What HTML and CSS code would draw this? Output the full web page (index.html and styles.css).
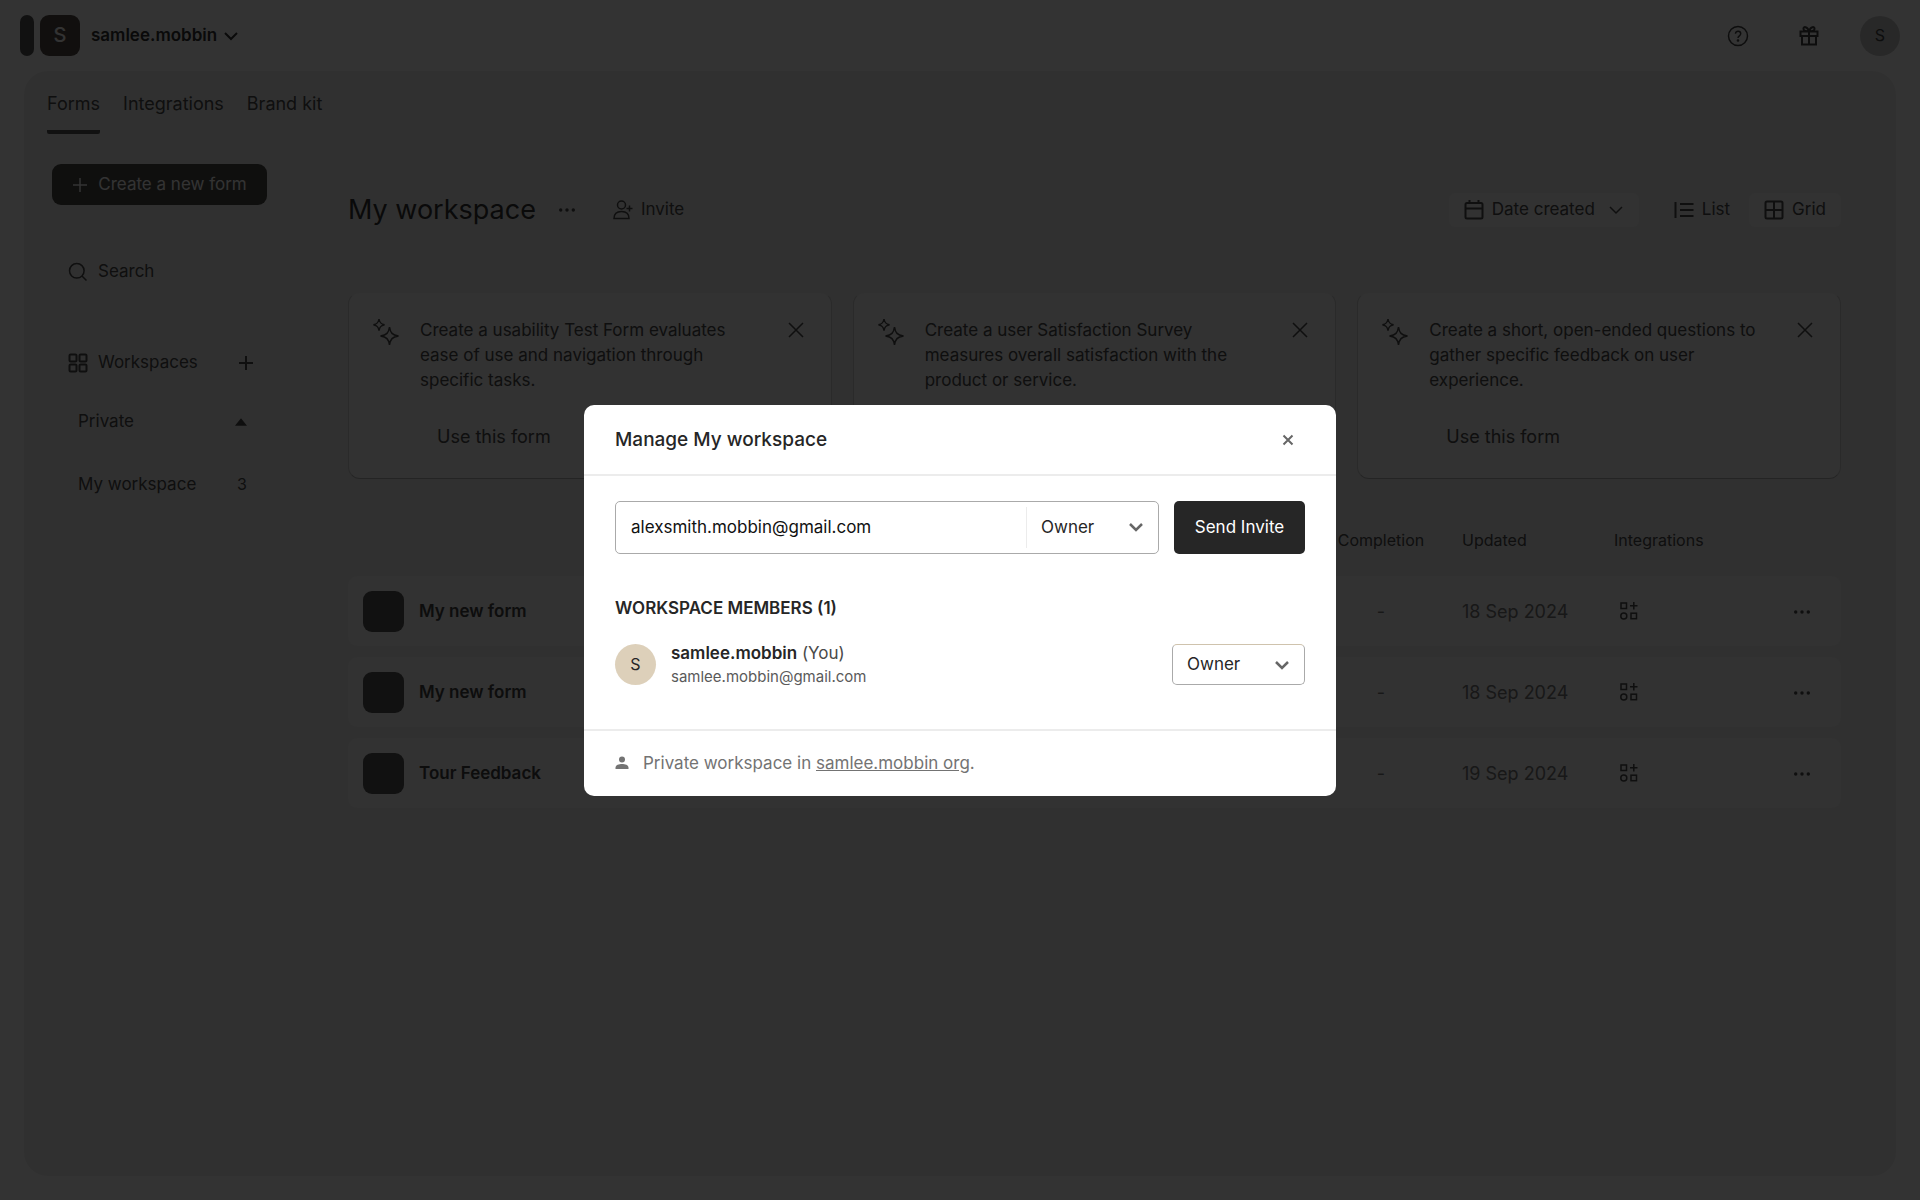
FILE: index.html
```html
<!DOCTYPE html>
<html lang="en">
<head>
<meta charset="utf-8">
<meta name="viewport" content="width=device-width, initial-scale=1">
<title>My workspace</title>
<link rel="stylesheet" href="styles.css">
</head>
<body>
<svg class="sprite" aria-hidden="true">
  <symbol id="chevron" viewBox="0 0 16 16"><path d="M2 5l6 6 6-6"/></symbol>
  <symbol id="dots" viewBox="0 0 20 20"><g fill="currentColor" stroke="none"><circle cx="3" cy="10" r="1.900"/><circle cx="10" cy="10" r="1.900"/><circle cx="17" cy="10" r="1.900"/></g></symbol>
  <symbol id="plus" viewBox="0 0 16 16"><path d="M8 1v14M1 8h14"/></symbol>
  <symbol id="cross" viewBox="0 0 16 16"><path d="M1 1l14 14M15 1L1 15"/></symbol>
  <symbol id="sparkles" viewBox="0 0 28 28"><path d="M7 1c.6 3.800 1.800 5 5.500 5.800C8.800 7.600 7.600 8.800 7 12.600 6.400 8.800 5.200 7.600 1.500 6.800 5.200 6 6.400 4.800 7 1zM17.500 9c.9 6 2.800 8 9 9-6.200 1-8.100 3-9 9-.9-6-2.800-8-9-9 6.200-1 8.100-3 9-9z"/></symbol>
  <symbol id="apps" viewBox="0 0 20 20"><rect x="2" y="2" width="5.500" height="5.500"/><circle cx="4.800" cy="15" r="3"/><rect x="12" y="12.200" width="5.500" height="5.500"/><path d="M14.800 1v7.500M11 4.800h7.500"/></symbol>
</svg>

<header class="topbar">
  <span class="logo"></span>
  <button class="account" type="button"><span class="account-badge">S</span>samlee.mobbin<svg class="icon i16 bold"><use href="#chevron"/></svg></button>
  <nav class="top-actions">
    <button class="plain help" type="button" aria-label="Help"><svg class="icon i22" viewBox="0 0 22 22"><circle cx="11" cy="11" r="9.500"/><path d="M8.500 8.800c0-3.400 5.200-3.200 5.200 0 0 2-2.700 2-2.700 4.200"/><circle cx="11" cy="15.500" r=".6"/></svg></button>
    <button class="plain" type="button" aria-label="Rewards"><svg class="icon i22 bold" viewBox="0 0 22 22"><path d="M2.500 6.500h17v4.500h-17zM4 11v8.500h14V11M11 6.500v13M11 6.500C9.500 1 5 1.200 5.500 4.200 5.800 6 8.500 6.500 11 6.500zM11 6.500c1.500-5.500 6-5.300 5.500-2.300C16.200 6 13.500 6.500 11 6.500z"/></svg></button>
    <button class="avatar" type="button">S</button>
  </nav>
</header>

<div class="panel">
  <nav class="tabs">
    <a class="tab active" href="#forms">Forms</a>
    <a class="tab" href="#integrations">Integrations</a>
    <a class="tab" href="#brand">Brand kit</a>
  </nav>
  <div class="columns">
    <aside class="sidebar">
      <button class="create" type="button"><svg class="icon i16"><use href="#plus"/></svg>Create a new form</button>
      <label class="search"><svg class="icon i20" viewBox="0 0 20 20"><circle cx="8.800" cy="8.800" r="7.300"/><path d="M14 14l4.500 4.500"/></svg><input type="search" placeholder="Search" aria-label="Search"></label>
      <div class="side-row heading">
        <svg class="icon i20 bold" viewBox="0 0 20 20"><rect x="1.500" y="1.500" width="7" height="7" rx="1"/><rect x="11.500" y="1.500" width="7" height="7" rx="1"/><rect x="1.500" y="11.500" width="7" height="7" rx="1"/><rect x="11.500" y="11.500" width="7" height="7" rx="1"/></svg>
        <span>Workspaces</span>
        <button class="plain push" type="button" aria-label="Add workspace"><svg class="icon i16 bold"><use href="#plus"/></svg></button>
      </div>
      <div class="side-row group"><span>Private</span><button class="plain push" type="button" aria-label="Collapse"><svg class="icon i12" viewBox="0 0 12 12"><path d="M1.500 9L6 3.500 10.500 9z" fill="currentColor"/></svg></button></div>
      <a class="side-row item" href="#workspace"><span>My workspace</span><span class="count push">3</span></a>
    </aside>

    <main class="content">
      <div class="toolbar">
        <h1>My workspace</h1>
        <button class="plain more" type="button" aria-label="More"><svg class="icon i18"><use href="#dots"/></svg></button>
        <button class="plain labelled" type="button"><svg class="icon i20" viewBox="0 0 20 20"><circle cx="8.500" cy="5" r="4"/><path d="M1 18.500c0-4.500 3-7 7.500-7s7.500 2.500 7.500 7zM16.500 5.500v6M13.500 8.500h6"/></svg>Invite</button>
        <div class="view-actions">
          <button class="chip" type="button"><svg class="icon i20 bold" viewBox="0 0 20 20"><rect x="1.500" y="3" width="17" height="15.500" rx="1.500"/><path d="M1.500 8.500h17M5.500 0v4M14.500 0v4"/></svg>Date created<svg class="icon i16 chip-arrow"><use href="#chevron"/></svg></button>
          <button class="chip flat" type="button"><svg class="icon i20 bold" viewBox="0 0 20 20"><path d="M1.500 2v16M6 4h13.500M6 10h13.500M6 16h13.500"/></svg>List</button>
          <button class="chip" type="button"><svg class="icon i20 bold" viewBox="0 0 20 20"><rect x="1.500" y="1.500" width="17" height="17" rx="1.500"/><path d="M10 1.500v17M1.500 10h17"/></svg>Grid</button>
        </div>
      </div>

      <section class="cards">
        <article class="card">
          <svg class="icon i28"><use href="#sparkles"/></svg>
          <div class="card-body"><p>Create a usability Test Form evaluates ease of use and navigation through specific tasks.</p><button class="plain use" type="button">Use this form</button></div>
          <button class="plain close" type="button" aria-label="Dismiss"><svg class="icon i16"><use href="#cross"/></svg></button>
        </article>
        <article class="card">
          <svg class="icon i28"><use href="#sparkles"/></svg>
          <div class="card-body"><p>Create a user Satisfaction Survey measures overall satisfaction with the product or service.</p></div>
          <button class="plain close" type="button" aria-label="Dismiss"><svg class="icon i16"><use href="#cross"/></svg></button>
        </article>
        <article class="card">
          <svg class="icon i28"><use href="#sparkles"/></svg>
          <div class="card-body"><p>Create a short, open-ended questions to gather specific feedback on user experience.</p><button class="plain use" type="button">Use this form</button></div>
          <button class="plain close" type="button" aria-label="Dismiss"><svg class="icon i16"><use href="#cross"/></svg></button>
        </article>
      </section>

      <table class="forms">
        <thead><tr><th class="name"></th><th class="completion">Completion</th><th class="updated">Updated</th><th class="integrations">Integrations</th><th class="actions"></th></tr></thead>
        <tbody>
          <tr>
            <td class="name"><a href="#form-1"><span class="thumb"></span>My new form</a></td><td class="completion">-</td><td class="updated">18 Sep 2024</td>
            <td class="integrations"><button class="plain" type="button" aria-label="Add integration"><svg class="icon i20"><use href="#apps"/></svg></button></td>
            <td class="actions"><button class="plain" type="button" aria-label="More"><svg class="icon i18"><use href="#dots"/></svg></button></td>
          </tr>
          <tr>
            <td class="name"><a href="#form-2"><span class="thumb"></span>My new form</a></td><td class="completion">-</td><td class="updated">18 Sep 2024</td>
            <td class="integrations"><button class="plain" type="button" aria-label="Add integration"><svg class="icon i20"><use href="#apps"/></svg></button></td>
            <td class="actions"><button class="plain" type="button" aria-label="More"><svg class="icon i18"><use href="#dots"/></svg></button></td>
          </tr>
          <tr>
            <td class="name"><a href="#form-3"><span class="thumb"></span>Tour Feedback</a></td><td class="completion">-</td><td class="updated">19 Sep 2024</td>
            <td class="integrations"><button class="plain" type="button" aria-label="Add integration"><svg class="icon i20"><use href="#apps"/></svg></button></td>
            <td class="actions"><button class="plain" type="button" aria-label="More"><svg class="icon i18"><use href="#dots"/></svg></button></td>
          </tr>
        </tbody>
      </table>
    </main>
  </div>
</div>

<div class="backdrop">
  <section class="modal" role="dialog" aria-modal="true" aria-labelledby="modal-title">
    <header class="modal-head">
      <h2 id="modal-title">Manage My workspace</h2>
      <button class="modal-close" type="button" aria-label="Close"><svg class="icon i12" viewBox="0 0 12 12"><path d="M1.500 1.500l9 9M10.500 1.500l-9 9"/></svg></button>
    </header>
    <div class="modal-body">
      <form class="invite">
        <div class="invite-field">
          <input type="email" value="alexsmith.mobbin@gmail.com" aria-label="Email">
          <div class="select divided"><select aria-label="Role for invite"><option>Owner</option></select><svg class="icon i16"><use href="#chevron"/></svg></div>
        </div>
        <button class="send" type="button">Send Invite</button>
      </form>
      <h3>WORKSPACE MEMBERS (1)</h3>
      <div class="member">
        <span class="member-avatar">S</span>
        <div class="member-text">
          <p class="member-name"><strong>samlee.mobbin</strong> (You)</p>
          <p class="member-mail">samlee.mobbin@gmail.com</p>
        </div>
        <div class="select boxed"><select aria-label="Role of samlee.mobbin"><option>Owner</option></select><svg class="icon i16"><use href="#chevron"/></svg></div>
      </div>
    </div>
    <footer class="modal-foot">
      <svg class="icon i14" viewBox="0 0 14 14"><g fill="currentColor" stroke="none"><circle cx="7" cy="3.400" r="3"/><path d="M.5 13v-1.200C.5 9 4 8.100 7 8.100s6.500.9 6.500 3.700V13z"/></g></svg>
      <p>Private workspace in <a href="#org">samlee.mobbin org</a>.</p>
    </footer>
  </section>
</div>
</body>
</html>
```
FILE: styles.css
```css
* { box-sizing: border-box; }

body {
  margin: 0;
  min-height: 100vh;
  padding: 0 24px 24px;
  display: flex;
  flex-direction: column;
  background: #fff;
  color: #4a4a4a;
  font: 17px/25px Inter, "Liberation Sans", sans-serif;
}

h1, h2, h3, p { margin: 0; font-weight: 400; }
a { color: inherit; text-decoration: none; }
button, input, select { font: inherit; color: inherit; }
button { display: inline-flex; align-items: center; justify-content: center; border: 0; background: none; padding: 0; }

.sprite { display: none; }
.icon { flex: none; fill: none; stroke: currentColor; stroke-width: 1.5; }
.bold { stroke-width: 2; }
.i12 { width: 12px; height: 12px; }
.i14 { width: 14px; height: 14px; }
.i16 { width: 16px; height: 16px; }
.i18 { width: 18px; height: 18px; }
.i20 { width: 20px; height: 20px; }
.i22 { width: 22px; height: 22px; }
.i28 { width: 28px; height: 28px; }
.push { margin-left: auto; }

/* Top bar */
.topbar { display: flex; align-items: center; gap: 6px; height: 71px; margin: 0 -4px; }
.logo { width: 14px; height: 41px; border-radius: 7px; background: #555; }
.account { gap: 6px; font-weight: 600; color: #333; }
.account-badge { width: 40px; height: 41px; margin-right: 5px; border-radius: 9px; background: #574e49; color: #fff; font-size: 20px; font-weight: 500; line-height: 41px; }
.top-actions { display: flex; align-items: center; gap: 40px; margin-left: auto; color: #444; }
.help { margin-right: 9px; }
.avatar { width: 40px; height: 40px; border-radius: 50%; background: #c8c8c8; font-size: 16px; }

/* Page panel */
.panel { flex: 1; padding: 0 55px 0 23px; border-radius: 24px; background: #f0f0f0; }
.tabs { display: flex; gap: 23px; }
.tab { padding: 20px 0 14px; border-bottom: 4px solid transparent; border-radius: 2px; font-size: 18px; }
.tab.active { border-color: #555; }
.columns { display: flex; gap: 81px; padding: 30px 0 0 5px; }

/* Sidebar */
.sidebar { flex: none; width: 215px; }
.create { width: 100%; height: 41px; gap: 10px; border-radius: 9px; background: #4c4a47; color: #fff; }
.search { display: flex; align-items: center; gap: 10px; margin-top: 54px; padding: 0 16px; }
.search input { width: 100%; padding: 0; border: 0; background: none; outline: none; }
.search input::placeholder { color: #4a4a4a; opacity: 1; }
.side-row { display: flex; align-items: center; }
.heading { gap: 10px; margin-top: 66px; padding: 0 13px 0 16px; }
.group { margin-top: 34px; padding: 0 20px 0 26px; }
.item { margin-top: 38px; padding: 0 20px 0 26px; }
.count { font-size: 16px; }

/* Main column */
.content { flex: 1; min-width: 0; padding-top: 25px; }
.toolbar { display: flex; align-items: center; height: 41px; }
h1 { font-size: 27px; line-height: 41px; color: #333; }
.more { margin: 0 37px 0 22px; }
.labelled { gap: 8px; }
.view-actions { display: flex; gap: 19px; margin-left: auto; }
.chip { height: 34px; gap: 8px; padding: 0 15px; border-radius: 6px; background: #f8f8f8; }
.chip.flat { margin-left: 16px; padding: 0; background: none; }
.chip-arrow { margin-left: 5px; }

.cards { display: grid; grid-template-columns: repeat(3, 1fr); gap: 21px; margin-top: 62px; }
.card { display: flex; align-items: flex-start; min-height: 187px; padding: 25px 27px 24px 23px; border: 1px solid #cfcfcf; border-top-color: #f0f0f0; border-bottom-color: #b4b4b4; border-radius: 12px; background: #f7f7f7; }
.card-body { flex: 1; padding: 0 24px 0 20px; }
.use { margin: 31px 0 0 17px; font-size: 18px; }
.close { margin-top: 4px; }

.forms { width: 100%; margin-top: 38px; border-collapse: separate; border-spacing: 0 11px; table-layout: fixed; }
.forms th { padding: 0 18px 12px; font-size: 16px; font-weight: 400; text-align: left; }
.forms td { height: 70px; padding: 0 18px; background: #f7f7f7; color: #777; font-size: 18px; }
.forms td:first-child { border-radius: 9px 0 0 9px; }
.forms td:last-child { border-radius: 0 9px 9px 0; }
.forms .name { padding-left: 15px; font-size: 17px; }
.name a { display: flex; align-items: center; gap: 15px; font-weight: 600; color: #444; }
.thumb { width: 41px; height: 41px; border-radius: 9px; background: #555; }
.forms .completion { width: 126px; text-align: center; }
.forms .updated { width: 152px; }
.forms .integrations { width: 152px; }
.forms .actions { width: 93px; padding-right: 25px; text-align: right; }
.forms button { vertical-align: middle; color: #4a4a4a; }
.forms td .plain { padding: 4px 5px; }

/* Dialog */
.backdrop { position: fixed; inset: 0; display: flex; align-items: center; justify-content: center; background: rgba(0, 0, 0, .8); }
.modal { width: 752px; max-width: 100%; border-radius: 10px; background: #fff; color: #262626; }
.modal-head { display: flex; align-items: center; justify-content: space-between; padding: 22px 31px 21px; border-bottom: 2px solid #ececec; }
h2 { font-size: 19px; line-height: 26px; font-weight: 500; }
.modal-close { width: 34px; height: 26px; color: #666; }
.modal-close .icon { stroke-width: 2; }
.modal-body { padding: 25px 31px 40px; }
.invite { display: flex; gap: 15px; }
.invite-field { flex: 1; display: flex; align-items: center; height: 53px; border: 1px solid #aaa; border-radius: 5px; }
.invite-field input { flex: 1; min-width: 0; padding: 0 15px; border: 0; background: none; outline: none; color: #111; }
.send { width: 131px; height: 53px; border-radius: 5px; background: #262626; color: #fff; }
.select { display: grid; grid-template-columns: 1fr 16px; align-items: center; padding-right: 14px; color: #666; }
.select .icon { stroke-width: 2.5; }
.select select { width: 100%; padding: 0 0 0 14px; border: 0; background: none; appearance: none; outline: none; color: #262626; }
.divided { width: 132px; height: 41px; border-left: 1px solid #ececec; }
.boxed { width: 133px; height: 41px; border: 1px solid #aaa; border-top-color: #cfc3ad; border-radius: 5px; }
h3 { margin-top: 41px; font-size: 17px; line-height: 26px; font-weight: 600; }
.member { display: flex; align-items: center; gap: 15px; margin-top: 20px; }
.member-avatar { width: 41px; height: 41px; border-radius: 50%; background: #ddd0ba; font-size: 16px; line-height: 41px; text-align: center; }
.member-text { flex: 1; }
.member-name { line-height: 24px; color: #4a4a4a; }
.member-name strong { font-weight: 600; color: #262626; }
.member-mail { font-size: 15px; line-height: 24px; color: #5a5a5a; }
.modal-foot { display: flex; align-items: center; gap: 14px; padding: 20px 31px; border-top: 2px solid #ececec; color: #737373; }
.modal-foot a { text-decoration: underline; }
```
